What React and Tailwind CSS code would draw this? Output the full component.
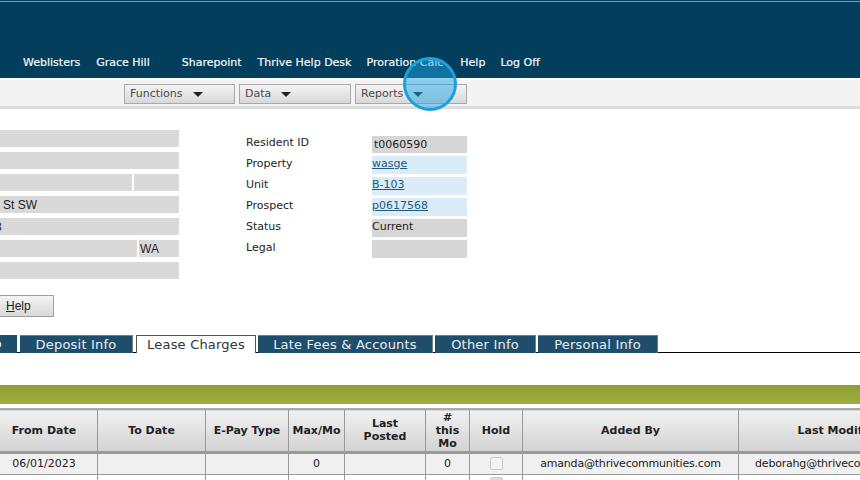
import React from "react";

const verdana = "[font-family:'DejaVu_Sans',sans-serif]";
const arial = "[font-family:'Liberation_Sans',sans-serif]";

const NavItem = ({ children, className = "" }) => (
  <span className={`text-[11px] font-normal text-[#f4f7f9] whitespace-nowrap [-webkit-text-stroke:0.2px_#f4f7f9] ${className}`}>{children}</span>
);

const MenuButton = ({ label, width, className = "" }) => (
  <div
    className={`h-[20px] flex items-center pl-[5px] border border-[#a9a9a9] bg-gradient-to-b from-[#f4f4f4] to-[#d8d8d8] text-[11px] text-[#4a4a4a] ${className}`}
    style={{ width }}
  >
    <span>{label}</span>
    <span className="ml-[10px] w-0 h-0 border-x-[5px] border-x-transparent border-t-[5px] border-t-[#222]" />
  </div>
);

const Field = ({ children, className = "" }) => (
  <div className={`h-[17px] bg-[#d9d9d9] overflow-hidden whitespace-nowrap text-[12px] leading-[18px] ${arial} text-[#222] ${className}`}>
    {children}
  </div>
);

const info = [
  { label: "Resident ID", value: "t0060590", kind: "id" },
  { label: "Property", value: "wasge", kind: "link" },
  { label: "Unit", value: "B-103", kind: "link" },
  { label: "Prospect", value: "p0617568", kind: "link" },
  { label: "Status", value: "Current", kind: "text" },
  { label: "Legal", value: "", kind: "text" },
];

const tabs = [
  { label: "Deposit Info", w: "w-[113px] ml-[3px]" },
  { label: "Lease Charges", w: "w-[120px] ml-[3px]", active: true },
  { label: "Late Fees & Accounts", w: "w-[175px] ml-[2px]" },
  { label: "Other Info", w: "w-[101px] ml-[2px]" },
  { label: "Personal Info", w: "w-[120px] ml-[2px]" },
];

const cols = [
  { lines: ["From Date"], w: "w-[107px]" },
  { lines: ["To Date"], w: "w-[108px]" },
  { lines: ["E-Pay Type"], w: "w-[83px]" },
  { lines: ["Max/Mo"], w: "w-[56px]" },
  { lines: ["Last", "Posted"], w: "w-[81px]" },
  { lines: ["#", "this", "Mo"], w: "w-[44px]" },
  { lines: ["Hold"], w: "w-[53px]" },
  { lines: ["Added By"], w: "w-[216px]" },
  { lines: ["Last Modified By"], w: "w-[221px]" },
];

const row = ["06/01/2023", "", "", "0", "", "0", "check", "amanda@thrivecommunities.com", "deborahg@thrivecommunities.com"];

export default function App() {
  return (
    <div className={`relative w-[860px] h-[480px] overflow-hidden bg-white ${verdana}`}>
      {/* HEADER */}
      <div className="h-[78px] bg-[#033f5c] pt-px">
        <div className="h-px bg-[#7d9fb0]" />
        <div className="flex items-center pt-[55px] pl-[23px] h-[67px]">
          <NavItem>Weblisters</NavItem>
          <NavItem className="ml-[16px]">Grace Hill</NavItem>
          <NavItem className="ml-[32px]">Sharepoint</NavItem>
          <NavItem className="ml-[16px]">Thrive Help Desk</NavItem>
          <NavItem className="ml-[15px]">Proration Calc</NavItem>
          <NavItem className="ml-[17px]">Help</NavItem>
          <NavItem className="ml-[15px]">Log Off</NavItem>
        </div>
      </div>

      {/* TOOLBAR */}
      <div className="h-[31px] border-t-2 border-t-white border-b-[3px] border-b-[#dcdcdc] bg-[#f3f3f3] flex items-start pt-[4px] pl-[124px]">
        <MenuButton label="Functions" width={111} />
        <MenuButton label="Data" width={112} className="ml-[4px]" />
        <MenuButton label="Reports" width={112} className="ml-[4px]" />
      </div>

      {/* FORM */}
      <div className="flex pt-[21px] h-[226px]">
        <div className="w-[179px] flex flex-col gap-[5px]">
          <Field />
          <Field />
          <div className="flex gap-[2px]">
            <Field className="w-[132px]" />
            <Field className="w-[45px]" />
          </div>
          <Field className="pl-[3px]">St SW</Field>
          <Field className="-ml-[5px] w-[184px]">3</Field>
          <div className="flex gap-[2px]">
            <Field className="w-[137px]" />
            <Field className="w-[40px] pl-[1px]">WA</Field>
          </div>
          <Field />
          <div className={`-ml-px mt-[11px] w-[55px] h-[22px] border border-[#a0a0a0] bg-gradient-to-b from-[#f4f4f4] to-[#d9d9d9] text-[12px] leading-[20px] pl-[6px] ${arial} text-[#222]`}>
            <span className="underline">H</span>elp
          </div>
        </div>

        <div className="ml-[67px] pt-[6px] flex flex-col gap-[3px] w-[221px]">
          {info.map((item) => (
            <div key={item.label} className={`flex text-[11px] ${item.kind === "id" ? "h-[17px]" : "h-[18px]"}`}>
              <span className={`w-[126px] text-[#222] ${item.kind === "id" ? "leading-[14px]" : "leading-[16px]"}`}>{item.label}</span>
              <span
                className={`w-[95px] ${
                  item.kind === "link"
                    ? "bg-[#daecf7] text-[#1f5a7d] underline"
                    : "bg-[#d6d6d6] text-[#222]"
                } ${item.kind === "id" ? "pl-[2px] leading-[18px]" : "leading-[16px]"}`}
              >
                {item.value}
              </span>
            </div>
          ))}
        </div>
      </div>

      {/* TABS */}
      <div className="flex h-[18px] border-b border-b-black text-[13px] tracking-[0.2px]">
        <div className="w-[17px] h-[18px] shrink-0 bg-[#1f4e6d] text-[#e8eef2] overflow-hidden flex justify-end pr-[15px] leading-[17px] whitespace-nowrap">
          Info
        </div>
        {tabs.map((tab) => (
          <div
            key={tab.label}
            className={`${tab.w} h-[18px] shrink-0 text-center leading-[17px] whitespace-nowrap ${
              tab.active
                ? "bg-white text-[#333] border-x border-t border-[#555]"
                : "bg-[#1f4e6d] text-[#e8eef2] border-t border-r border-[#6d7f8a]"
            }`}
          >
            {tab.label}
          </div>
        ))}
      </div>

      {/* OLIVE BAR */}
      <div className="mt-[32px] h-[19px] bg-gradient-to-b from-[#8f9f35] to-[#a0ad3f]" />

      {/* TABLE */}
      <table className="-ml-[10px] mt-[4px] table-fixed border-collapse w-[969px] text-[11px]">
        <colgroup>
          {cols.map((c) => (
            <col key={c.lines.join(" ")} className={c.w} />
          ))}
        </colgroup>
        <thead>
          <tr className="h-[43px]">
            {cols.map((c) => (
              <th
                key={c.lines.join(" ")}
                className="border-x border-x-[#999] border-t-2 border-t-[#aaa] border-b-[3px] border-b-[#999] bg-gradient-to-b from-[#f1f1f1] to-[#d3d3d3] text-[#222] font-bold leading-[13px] px-0 whitespace-nowrap"
              >
                {c.lines.map((line) => (
                  <div key={line}>{line}</div>
                ))}
              </th>
            ))}
          </tr>
        </thead>
        <tbody>
          <tr className="h-[22px] bg-[#f0f0f0]">
            {row.map((cell, i) => (
              <td key={i} className={`border border-[#999] text-center text-[#222] whitespace-nowrap overflow-hidden ${cell === "check" ? "" : "pt-px"} ${i > 6 ? "tracking-[-0.2px]" : ""}`}>
                {cell === "check" ? (
                  <span className="inline-block align-middle w-[13px] h-[13px] rounded-[2px] border border-[#ccc] bg-[#f3f3f3]" />
                ) : (
                  cell
                )}
              </td>
            ))}
          </tr>
          <tr className="h-[22px] bg-white">
            {row.map((cell, i) => (
              <td key={i} className="border-x border-x-[#999] text-center">
                {cell === "check" && (
                  <span className="inline-block align-top w-[13px] h-[13px] rounded-[2px] border border-[#ccc] bg-[#ddd]" />
                )}
              </td>
            ))}
          </tr>
        </tbody>
      </table>

      {/* CLICK HIGHLIGHT */}
      <div className="absolute left-[403px] top-[57px] w-[54px] h-[54px] rounded-full bg-[#1fa5e5]/50 border-[3px] border-[#1fa0dc]" />
    </div>
  );
}
